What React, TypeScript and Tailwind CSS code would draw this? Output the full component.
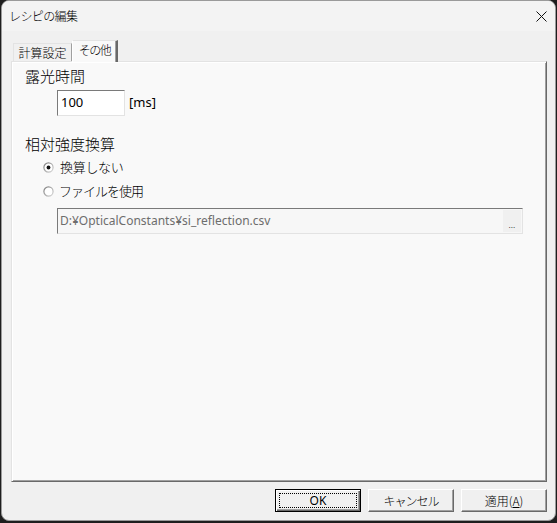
import React from "react";

const JP = "font-['Noto_Sans_CJK_JP',sans-serif] font-light";

function Radio({ checked }: { checked: boolean }) {
  return (
    <svg width="11" height="11" viewBox="0 0 11 11" className="shrink-0">
      <defs>
        <linearGradient id={checked ? "rg1" : "rg2"} x1="0" y1="0" x2="1" y2="1">
          <stop offset="0" stopColor="#7a7a7a" />
          <stop offset="1" stopColor="#d8d8d8" />
        </linearGradient>
      </defs>
      <circle cx="5.5" cy="5.5" r="4.6" fill="#ffffff" stroke={`url(#${checked ? "rg1" : "rg2"})`} strokeWidth="1.2" />
      {checked && <circle cx="5.5" cy="5.5" r="1.9" fill="#111" />}
    </svg>
  );
}

function Btn({ children, def }: { children: React.ReactNode; def?: boolean }) {
  return (
    <div
      className={
        "w-[86px] h-[23px] bg-[#f0f0f0] flex items-center justify-center text-[12px] leading-[16px] " +
        (def
          ? "border border-black shadow-[inset_1px_1px_0_#fff,inset_-1px_-1px_0_#696969,inset_-2px_-2px_0_#a0a0a0]"
          : "border border-t-white border-l-white border-r-[#696969] border-b-[#696969] shadow-[inset_-1px_-1px_0_#a0a0a0]")
      }
    >
      {def ? (
        <div className="w-[78px] h-[15px] border border-dotted border-black flex items-center justify-center">
          {children}
        </div>
      ) : (
        children
      )}
    </div>
  );
}

export default function App() {
  return (
    <div className={"w-[557px] h-[523px] bg-[#1e1e1e] pl-[1px] text-black " + JP}>
      <div className="w-[555px] h-[521px] rounded-[8px] border border-[#9a9a9a] bg-[#f0f0f0] overflow-hidden flex flex-col">
        {/* title bar */}
        <div className="h-[30px] bg-[#f3f3f3] flex items-center justify-between pl-[7px] pr-[8px] shrink-0">
          <span className="text-[12px] leading-[16px] tracking-[-0.6px]">レシピの編集</span>
          <svg width="11" height="11" viewBox="0 0 11 11">
            <path d="M0.5 0.5 L10.5 10.5 M10.5 0.5 L0.5 10.5" stroke="#111" strokeWidth="1" />
          </svg>
        </div>
        {/* body */}
        <div className="flex-1 pt-[9px] pl-[9px] pr-[8px] flex flex-col">
          {/* tabs */}
          <div className="flex items-end h-[21px] pl-[2px]">
            <div className="w-[59px] h-[18px] border-t border-l border-t-[#e3e3e3] border-l-[#e3e3e3] border-r border-r-[#a0a0a0] bg-[#f0f0f0] flex items-center justify-center text-[12px] leading-[16px]">
              計算設定
            </div>
            <div className="relative z-10 -mb-[1px] w-[46px] h-[22px] bg-[#f9f9f9] border-t border-l border-t-[#e3e3e3] border-l-white border-r-2 border-r-[#696969] shadow-[inset_-1px_0_0_#a0a0a0] flex items-start justify-center pt-[1px] text-[12px] leading-[16px] tracking-[-1.5px]">
              その他
            </div>
          </div>
          {/* panel */}
          <div className="h-[421px] bg-[#f9f9f9] border border-t-[#e3e3e3] border-l-[#e3e3e3] border-r-[#696969] border-b-[#696969] shadow-[inset_1px_1px_0_#fff,inset_-1px_-1px_0_#a0a0a0] pl-[13px] flex flex-col">
            <div className="mt-[4px] text-[15px] leading-[20px]">露光時間</div>
            <div className="mt-[4px] ml-[32px] flex items-center">
              <div className="w-[68px] h-[26px] bg-white border border-t-[#7a7a7a] border-l-[#7a7a7a] border-r-[#e3e3e3] border-b-[#e3e3e3] flex items-center pl-[3px] font-['Noto_Sans',sans-serif] font-normal text-[13px]">
                100
              </div>
              <span className="ml-[4px] font-['Noto_Sans',sans-serif] font-normal text-[13px]">[ms]</span>
            </div>
            <div className="mt-[18px] text-[15px] leading-[20px]">相対強度換算</div>
            <div className="mt-[3px] ml-[18px] h-[20px] flex items-center gap-[6px]">
              <Radio checked />
              <span className="text-[13px] leading-[20px] tracking-[-0.3px]">換算しない</span>
            </div>
            <div className="mt-[4px] ml-[18px] h-[20px] flex items-center gap-[5px]">
              <Radio checked={false} />
              <span className="text-[13px] leading-[20px] tracking-[-1px]">ファイルを使用</span>
            </div>
            <div className="mt-[7px] ml-[32px] w-[466px] h-[26px] bg-[#f7f7f7] border border-t-[#7a7a7a] border-l-[#7a7a7a] border-r-[#e3e3e3] border-b-[#e3e3e3] flex items-center justify-between pl-[2px] pr-[1px]">
              <span className="font-['Noto_Sans',sans-serif] font-normal text-[12px] text-[#6d6d6d]">D:¥OpticalConstants¥si_reflection.csv</span>
              <div className="w-[18px] h-[22px] bg-[#f0f0f0] flex items-end justify-center pb-[3px] text-[9px] leading-[9px] text-[#222]">
                ...
              </div>
            </div>
          </div>
          {/* buttons */}
          <div className="mt-[7px] flex justify-end gap-[7px]">
            <Btn def>
              <span className="font-['Noto_Sans',sans-serif] font-normal text-[12px]">OK</span>
            </Btn>
            <Btn>
              <span className="tracking-[-1px]">キャンセル</span>
            </Btn>
            <Btn>
              <span>
                適用(<span className="underline">A</span>)
              </span>
            </Btn>
          </div>
        </div>
      </div>
    </div>
  );
}
